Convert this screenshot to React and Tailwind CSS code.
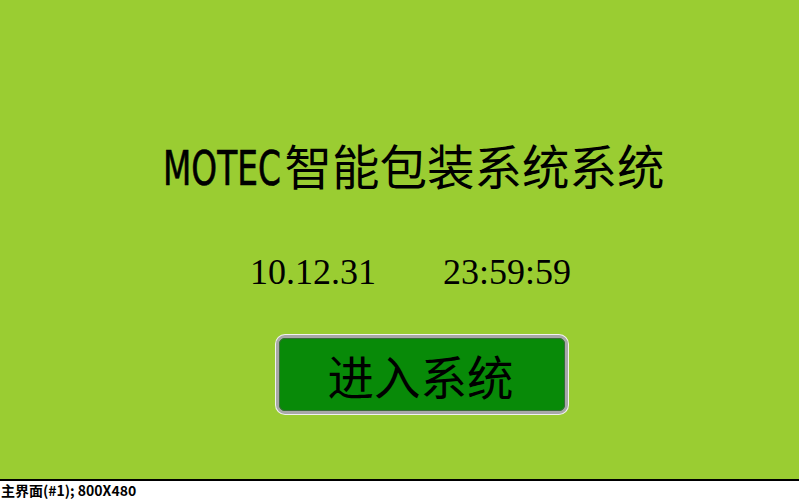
export default function App() {
  return (
    <div className="w-[799px] h-[501px] flex flex-col overflow-hidden bg-white">
      <div className="h-[479px] bg-[#9acd32] flex flex-col items-center pl-[36px]">
        <div className="mt-[140px] mr-[8px] flex items-baseline text-black h-[50px]">
          <span className="inline-block text-[48px] leading-[50px] origin-left scale-x-[0.76] w-[122px] whitespace-nowrap [-webkit-text-stroke:0.6px_black] font-['DejaVu_Sans_Condensed','DejaVu_Sans',sans-serif]">
            MOTEC
          </span>
          <span className="text-[47.5px] leading-[50px] font-['Noto_Sans_CJK_SC',sans-serif]">
            智能包装系统系统
          </span>
        </div>
        <div className="mt-[62px] flex gap-[67px] text-[36px] leading-[40px] text-black pr-[14px] font-['Liberation_Serif',serif]">
          <span>10.12.31</span>
          <span>23:59:59</span>
        </div>
        <div className="mt-[43px] ml-[8px] w-[292px] h-[79px] rounded-[9px] border-[3px] border-[#a8a8a8] shadow-[0_0_0_1px_#f2f2f2] bg-[#088a08] flex items-center justify-center">
          <div className="w-full h-full rounded-[6px] border border-[#3a6a3a] flex items-center justify-center">
            <span className="text-[46.5px] leading-[50px] text-black pr-[2px] font-['Noto_Sans_CJK_SC',sans-serif]">
              进入系统
            </span>
          </div>
        </div>
      </div>
      <div className="h-[2px] bg-black" />
      <div className="pl-[1px] pt-[1px] text-[14px] leading-[17px] font-bold text-black font-['Noto_Sans_CJK_SC',sans-serif]">
        主界面(#1); 800X480
      </div>
    </div>
  );
}
